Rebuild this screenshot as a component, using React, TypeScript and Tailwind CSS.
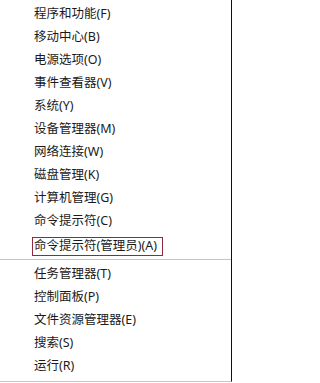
const topItems = [
  "程序和功能(F)",
  "移动中心(B)",
  "电源选项(O)",
  "事件查看器(V)",
  "系统(Y)",
  "设备管理器(M)",
  "网络连接(W)",
  "磁盘管理(K)",
  "计算机管理(G)",
  "命令提示符(C)",
];

const bottomItems = ["任务管理器(T)", "控制面板(P)", "文件资源管理器(E)", "搜索(S)", "运行(R)"];

function MenuItem({ label }: { label: string }) {
  return (
    <div className="h-[23px] flex items-center pl-[34px] text-[12.5px] text-[#1a1a1a] leading-none">
      {label}
    </div>
  );
}

export default function App() {
  return (
    <div
      className="w-[235px] h-[383px] bg-white overflow-hidden"
      style={{ fontFamily: '"Noto Sans", "Noto Sans CJK SC", sans-serif' }}
    >
      <div className="w-[232px] h-[382px] border-r border-b border-r-[#111] border-b-[#c8c8c8] pt-[3px] flex flex-col">
        {topItems.map((item) => (
          <MenuItem key={item} label={item} />
        ))}

        {/* highlighted admin prompt */}
        <div className="h-[23px] flex items-end pl-[32px]">
          <div className="h-[19px] w-[131px] border border-[#8e2a3c] flex items-center pl-[1px] text-[12.5px] text-[#1a1a1a] leading-none">
            命令提示符(管理员)(A)
          </div>
        </div>

        <div className="h-[7px] flex items-center">
          <div className="w-full h-px bg-[#c4c4c4]" />
        </div>

        {bottomItems.map((item) => (
          <MenuItem key={item} label={item} />
        ))}
      </div>
    </div>
  );
}
